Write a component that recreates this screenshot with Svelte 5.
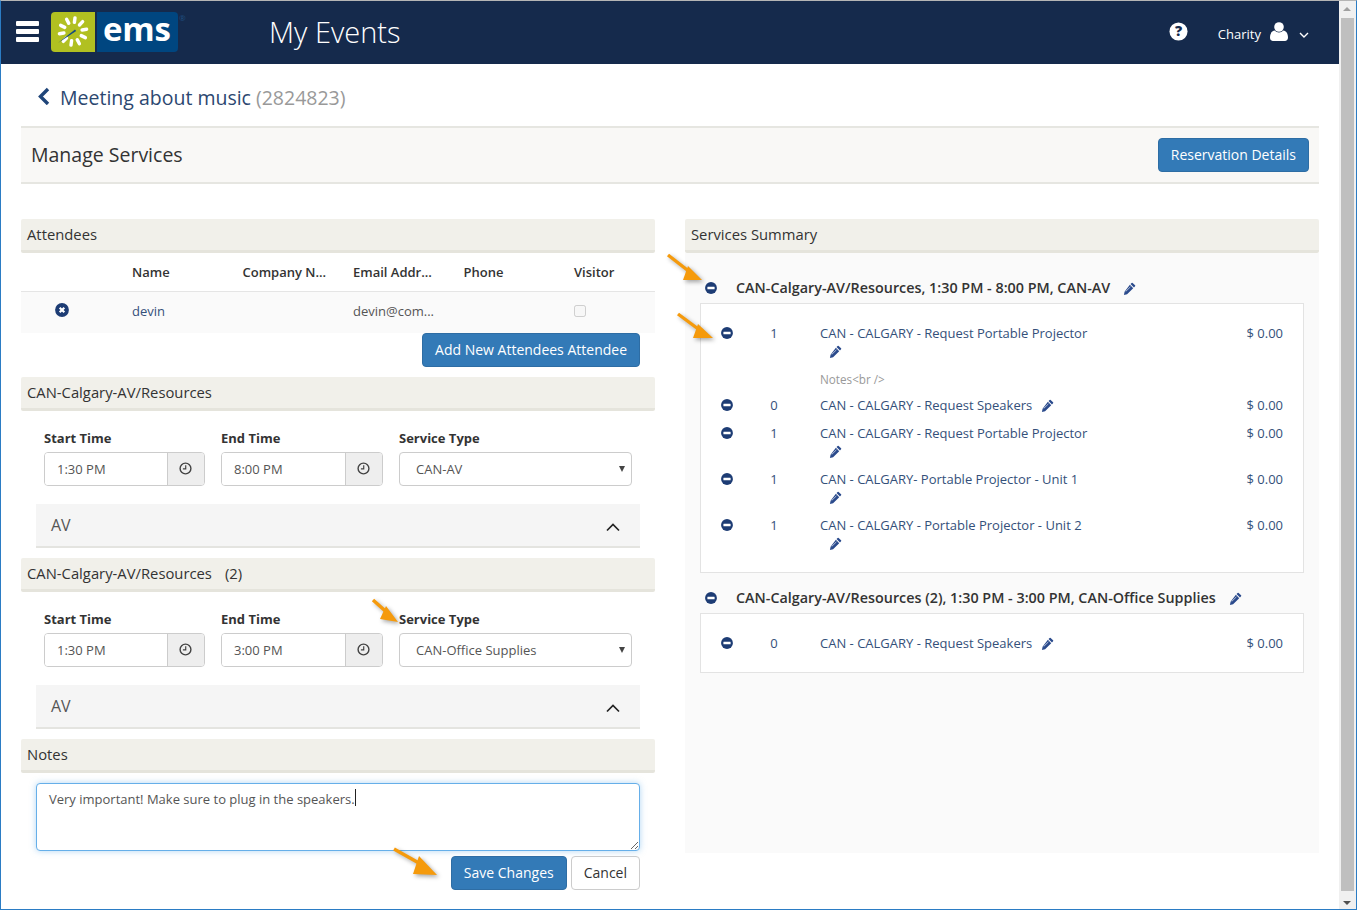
<script>
  const rays = [0, 36, 72, 108, 144, 180, 216, 252, 288, 324];
  const attendeeCols = ['Name', 'Company N...', 'Email Addr...', 'Phone', 'Visitor'];
  const groups = [
    {
      title: 'CAN-Calgary-AV/Resources, 1:30 PM - 8:00 PM, CAN-AV',
      rows: [
        { qty: 1, name: 'CAN - CALGARY - Request Portable Projector', wrap: true, notes: 'Notes<br />' },
        { qty: 0, name: 'CAN - CALGARY - Request Speakers' },
        { qty: 1, name: 'CAN - CALGARY - Request Portable Projector', wrap: true },
        { qty: 1, name: 'CAN - CALGARY- Portable Projector - Unit 1', wrap: true },
        { qty: 1, name: 'CAN - CALGARY - Portable Projector - Unit 2', wrap: true }
      ]
    },
    {
      title: 'CAN-Calgary-AV/Resources (2), 1:30 PM - 3:00 PM, CAN-Office Supplies',
      rows: [{ qty: 0, name: 'CAN - CALGARY - Request Speakers' }]
    }
  ];
  const forms = [
    { title: 'CAN-Calgary-AV/Resources', suffix: '', start: '1:30 PM', end: '8:00 PM', type: 'CAN-AV' },
    { title: 'CAN-Calgary-AV/Resources', suffix: '(2)', start: '1:30 PM', end: '3:00 PM', type: 'CAN-Office Supplies' }
  ];
  const arrows = [
    { x: 662, y: 250, w: 46, h: 36, d: 'M6 5 L33 26', head: 'M26 16 L40 30 L21 30 Z' },
    { x: 672, y: 308, w: 46, h: 36, d: 'M6 6 L33 26', head: 'M26 16 L41 30 L21 30 Z' },
    { x: 368, y: 595, w: 36, h: 32, d: 'M5 5 L23 21', head: 'M18 11 L30 27 L12 24 Z' },
    { x: 388, y: 843, w: 54, h: 38, d: 'M6 6 L38 24', head: 'M31 13 L49 32 L25 31 Z' }
  ];
</script>

{#snippet minus()}
  <svg class="ico" viewBox="0 0 14 14"><circle cx="7" cy="7" r="6.9" fill="#1d3c74" /><rect x="2.800" y="5.400" width="8.400" height="3.200" rx=".5" fill="#fff" /></svg>
{/snippet}

{#snippet pencil()}
  <svg class="pen" viewBox="0 0 14 14"><path fill="#2a4a8c" d="M10.4 1 13 3.6a.8.8 0 0 1 0 1.1l-1.2 1.2-3.7-3.7L9.3 1a.8.8 0 0 1 1.1 0ZM7.4 3 11 6.7l-6.6 6.6L1 14l.7-3.4L7.4 3Z" /><path d="M2.9 10.2 8 5.2" stroke="#fff" stroke-width=".7" /></svg>
{/snippet}

{#snippet clock()}
  <svg class="clock" viewBox="0 0 12 12"><circle cx="6" cy="6" r="5" fill="none" stroke="#444" stroke-width="1.300" /><path d="M6.200 3v3.300H3.600" fill="none" stroke="#444" stroke-width="1.100" /></svg>
{/snippet}

{#snippet sectionHead(text, suffix)}
  <h3 class="section-head">{text}{#if suffix}<span class="head-suffix">{suffix}</span>{/if}</h3>
{/snippet}

<div class="window">
  <div class="main">
    <header class="topbar">
      <div class="burger"><i></i><i></i><i></i></div>
      <div class="logo">
        <div class="logo-green">
          <svg viewBox="0 0 44 40" width="44" height="40">
            {#each rays as r}
              <rect x="20.400" y="4" width="3.400" height="8" rx="1.700" fill="#fff" transform="rotate({r + 8} 22 19.500)" />
            {/each}
            <path d="M7 31 24 17.500l1.200 1.400Z" fill="#134a80" />
          </svg>
        </div>
        <div class="logo-blue">ems</div>
        <span class="reg">®</span>
      </div>
      <h1 class="app-title">My Events</h1>
      <div class="top-right">
        <svg class="help" viewBox="0 0 20 20"><circle cx="10" cy="10" r="9.500" fill="#fff" /><text x="10" y="15" text-anchor="middle" class="help-mark">?</text></svg>
        <span class="user-name">Charity</span>
        <svg class="user" viewBox="0 0 18 19"><circle cx="9" cy="5" r="4.800" fill="#fff" /><path d="M0 15.500C0 11.500 2 9 4.500 8.600 6 10 7.400 10.400 9 10.400s3-.4 4.500-1.800C16 9 18 11.500 18 15.500 18 17.800 16.600 19 15 19H3C1.400 19 0 17.800 0 15.500Z" fill="#fff" /></svg>
        <svg class="caret" viewBox="0 0 10 6"><path d="M1 1l4 4 4-4" fill="none" stroke="#fff" stroke-width="1.400" /></svg>
      </div>
    </header>

    <div class="page">
      <div class="crumb">
        <svg class="back" viewBox="0 0 14 18"><path d="M11 2 3.500 9.500 11 17" fill="none" stroke="#1f4579" stroke-width="3.400" /></svg>
        <span class="meeting">Meeting about music</span>
        <span class="meeting-id">(2824823)</span>
      </div>

      <div class="manage">
        <h2>Manage Services</h2>
        <button class="btn primary">Reservation Details</button>
      </div>

      <div class="columns">
        <section class="left">
          {@render sectionHead('Attendees')}
          <div class="att-row att-head">
            <span></span>
            {#each attendeeCols as c}<span>{c}</span>{/each}
          </div>
          <div class="att-row att-body">
            <span class="att-x">
              <svg class="ico-x" viewBox="0 0 14 14"><circle cx="7" cy="7" r="6.900" fill="#1d3c74" /><path d="M4.700 4.700l4.600 4.600M9.300 4.700l-4.600 4.600" stroke="#fff" stroke-width="2.200" /></svg>
            </span>
            <span class="link">devin</span>
            <span></span>
            <span class="muted">devin@com...</span>
            <span></span>
            <span class="check-cell"><input class="check" type="checkbox" disabled /></span>
          </div>
          <div class="add-row"><button class="btn primary">Add New Attendees Attendee</button></div>

          {#each forms as f}
            {@render sectionHead(f.title, f.suffix)}
            <div class="form-grid">
              <div class="field">
                <span class="label">Start Time</span>
                <div class="time"><input value={f.start} /><span class="addon">{@render clock()}</span></div>
              </div>
              <div class="field">
                <span class="label">End Time</span>
                <div class="time"><input value={f.end} /><span class="addon">{@render clock()}</span></div>
              </div>
              <div class="field">
                <span class="label">Service Type</span>
                <div class="select"><span>{f.type}</span><i class="tri"></i></div>
              </div>
            </div>
            <div class="accordion">
              <span>AV</span>
              <svg class="acc-chev" viewBox="0 0 14 9"><path d="M1 7.500 7 1.500l6 6" fill="none" stroke="#222" stroke-width="1.700" /></svg>
            </div>
          {/each}

          {@render sectionHead('Notes')}
          <div class="notes">
            <textarea>Very important! Make sure to plug in the speakers.</textarea>
            <i class="text-caret"></i>
          </div>
          <div class="actions">
            <button class="btn primary">Save Changes</button>
            <button class="btn plain">Cancel</button>
          </div>
        </section>

        <section class="right">
          {@render sectionHead('Services Summary')}
          <div class="summary">
            {#each groups as g}
              <div class="group-title">
                {@render minus()}
                <span>{g.title}</span>
                {@render pencil()}
              </div>
              <div class="group-box">
                {#each g.rows as r}
                  <div class="svc-row">
                    <span class="svc-ico">{@render minus()}</span>
                    <span class="svc-qty">{r.qty}</span>
                    <div class="svc-name">
                      <span class="link">{r.name}</span>
                      {#if r.wrap}
                        <div class="pen-line">{@render pencil()}</div>
                      {:else}
                        <span class="pen-inline">{@render pencil()}</span>
                      {/if}
                      {#if r.notes}<div class="svc-notes">{r.notes}</div>{/if}
                    </div>
                    <span class="svc-price">$ 0.00</span>
                  </div>
                {/each}
              </div>
            {/each}
          </div>
        </section>
      </div>
    </div>
  </div>

  <div class="scrollbar">
    <i class="sb-up"></i>
    <div class="sb-thumb"></div>
    <i class="sb-down"></i>
  </div>

  {#each arrows as a}
    <svg class="arrow" style="left:{a.x}px;top:{a.y}px;width:{a.w}px;height:{a.h}px" viewBox="0 0 {a.w} {a.h}">
      <path d={a.d} stroke="#f59a0c" stroke-width="3.400" fill="none" />
      <path d={a.head} fill="#f59a0c" />
    </svg>
  {/each}
</div>

<style>
  :global(body) {
    margin: 0;
    font-family: "Open Sans", "Noto Sans", sans-serif;
    font-size: 13px;
    color: #333;
    background: #fff;
  }
  * { box-sizing: border-box; }
  i { display: block; }
  h1, h2, h3 { margin: 0; font-weight: 400; }

  .window {
    position: relative;
    display: flex;
    width: 1357px;
    height: 910px;
    overflow: hidden;
    border: 1px solid #2b7cc4;
    border-top-color: #b5b5b5;
    background: #fff;
  }
  .main { width: 1338px; flex: none; }

  .topbar {
    display: flex;
    align-items: center;
    height: 63px;
    background: #152a4c;
    color: #fff;
  }
  .burger { width: 23px; margin: -2px 12px 0 15px; display: flex; flex-direction: column; gap: 3.500px; }
  .burger i { height: 4.500px; background: #fff; border-radius: 1px; }
  .logo { position: relative; display: flex; gap: 2px; height: 40px; width: 127px; margin-top: -1px; }
  .logo-green { width: 44px; height: 40px; background: #b1c021; border-radius: 4px 0 0 4px; }
  .logo-blue {
    width: 81px;
    height: 40px;
    padding-left: 6px;
    background: #004680;
    border-radius: 0 4px 4px 0;
    color: #fff;
    font-weight: 700;
    font-size: 33px;
    line-height: 34px;
    letter-spacing: -0.2px;
  }
  .reg { position: absolute; left: 128px; top: 0; font-size: 8px; line-height: 12px; color: #1f4f80; }
  .app-title { margin-left: 91px; font-size: 29px; font-weight: 300; color: #fff; line-height: 36px; margin-top: -1px; }
  .top-right { margin-left: auto; display: flex; align-items: center; padding-right: 30px; }
  .help { width: 19px; height: 19px; margin-right: 30px; margin-top: -2px; }
  .help-mark { font-family: "Open Sans", sans-serif; font-weight: 800; font-size: 15px; fill: #152a4c; }
  .user-name { font-size: 13px; color: #fff; margin-right: 9px; margin-top: 3px; }
  .user { width: 18px; height: 19px; margin-right: 11px; margin-top: -2px; }
  .caret { width: 10px; height: 6px; margin-top: 4px; }

  .page { padding: 0 20px; }
  .crumb {
    display: flex;
    align-items: center;
    height: 62px;
    padding: 4px 0 0 15px;
    font-size: 19.500px;
  }
  .back { width: 14px; height: 18px; margin-right: 10px; margin-left: 1px; margin-top: -3px; }
  .meeting { color: #2c4770; margin-left: -1px; }
  .meeting-id { color: #999; margin-left: 5px; }

  .manage {
    display: flex;
    align-items: center;
    justify-content: space-between;
    height: 58px;
    padding: 0 10px;
    background: #f9f8f6;
    border-top: 2px solid #e6e6e1;
    border-bottom: 2px solid #e6e6e1;
  }
  .manage h2 { font-size: 19.500px; color: #333; margin-top: -2px; }

  .btn {
    height: 34px;
    padding: 0 12px 2px;
    border-radius: 4px;
    font: 400 14px "Open Sans", sans-serif;
    cursor: pointer;
  }
  .primary { background: #337ab7; border: 1px solid #2e6da4; color: #fff; }
  .plain { background: #fff; border: 1px solid #ccc; color: #333; }

  .columns { display: flex; gap: 30px; margin-top: 35px; }
  .left, .right { width: 634px; flex: none; }

  .section-head {
    height: 34px;
    padding: 0 6px;
    background: #f1f0ea;
    border-bottom: 3px solid #e5e4dc;
    border-radius: 2px;
    font-size: 14.800px;
    line-height: 31px;
    color: #333;
  }
  .head-suffix { margin-left: 13px; }

  .att-row {
    display: grid;
    grid-template-columns: 111px repeat(5, 110.500px);
    align-items: center;
  }
  .att-head { height: 39px; border-bottom: 1px solid #e5e5e5; font-weight: 600; font-size: 13px; color: #333; }
  .att-body { height: 41px; background: #fafafa; padding-bottom: 3px; }
  .att-x { display: flex; justify-content: center; position: relative; left: -15px; top: -1px; }
  .ico-x { width: 14px; height: 14px; display: block; }
  .link { color: #34507a; }
  .muted { color: #555; }
  .check-cell { position: relative; top: 1px; }
  .check { margin: 0; width: 12px; height: 12px; }
  .add-row { display: flex; justify-content: flex-end; padding-right: 15px; margin-bottom: 10px; }

  .form-grid {
    display: grid;
    grid-template-columns: 161px 162px 233px;
    gap: 16px;
    padding: 18px 0 0 23px;
  }
  .label { display: block; height: 18px; margin-bottom: 5px; font-weight: 700; font-size: 13px; line-height: 18px; color: #333; }
  .time {
    display: flex;
    height: 34px;
    border: 1px solid #ccc;
    border-radius: 4px;
    overflow: hidden;
  }
  .time input {
    flex: 1;
    min-width: 0;
    border: 0;
    padding: 0 12px;
    font: 400 13px "Open Sans", sans-serif;
    color: #555;
    background: #fff;
  }
  .addon {
    width: 37px;
    flex: none;
    display: flex;
    align-items: center;
    justify-content: center;
    background: #eee;
    border-left: 1px solid #ccc;
  }
  .clock { width: 13px; height: 13px; margin-left: -1px; margin-top: -1px; }
  .select {
    position: relative;
    display: flex;
    align-items: center;
    height: 34px;
    padding-left: 16px;
    border: 1px solid #ccc;
    border-radius: 4px;
    color: #555;
    background: #fff;
  }
  .tri {
    position: absolute;
    right: 6px;
    top: 13px;
    border: 3.500px solid transparent;
    border-top: 6px solid #444;
    border-bottom: 0;
  }
  .accordion {
    position: relative;
    display: flex;
    align-items: center;
    height: 44px;
    margin: 18px 15px 10px;
    padding-left: 15px;
    background: #f5f5f5;
    border-bottom: 2px solid #e4e4e0;
    font-size: 16px;
    color: #555;
  }
  .acc-chev { position: absolute; right: 20px; top: 19px; width: 14px; height: 9px; }

  .notes { position: relative; margin: 10px 15px 5px; height: 68px; }
  .notes textarea {
    display: block;
    width: 100%;
    height: 100%;
    padding: 5px 12px;
    border: 1px solid #66afe9;
    border-radius: 4px;
    box-shadow: 0 0 6px rgba(102, 175, 233, .5);
    font: 400 13px/20px "Open Sans", sans-serif;
    color: #555;
    outline: 0;
  }
  .text-caret { position: absolute; left: 319px; top: 6px; width: 1px; height: 17px; background: #222; }
  .actions { display: flex; justify-content: flex-end; gap: 4px; padding-right: 15px; }

  .summary { height: 600px; padding: 25px 15px 0; background: #fafafa; }
  .group-title {
    display: flex;
    align-items: center;
    height: 20px;
    margin-bottom: 5px;
    padding-left: 5px;
    font-weight: 600;
    font-size: 14.350px;
    color: #333;
  }
  .group-title span { margin: -2px 13px 0 19px; }
  .ico { width: 12px; height: 12px; flex: none; display: block; }
  .pen { width: 13px; height: 13px; display: block; flex: none; }
  .group-box {
    margin-bottom: 15px;
    padding: 15px 20px;
    background: #fff;
    border: 1px solid #e3e3e3;
  }
  .svc-row { display: grid; grid-template-columns: 33px 40px 1fr auto; }
  .svc-row > span, .svc-name { line-height: 18px; padding: 5px 0; }
  .svc-ico { padding-top: 8px !important; }
  .svc-qty { text-align: center; color: #34507a; }
  .svc-name { padding-left: 26px !important; }
  .svc-price { color: #34507a; }
  .pen-inline { display: inline-block; vertical-align: -2px; margin-left: 5px; }
  .pen-line { height: 18px; padding: 3px 0 0 9px; }
  .svc-notes { height: 26px; padding-top: 10px; font-size: 11.700px; color: #999; line-height: 18px; }

  .scrollbar {
    position: relative;
    width: 17px;
    flex: none;
    background: #f0f0f0;
    padding: 17px 2px 0;
  }
  .sb-thumb { height: 873px; width: 13px; background: #bfbfbf; }
  .sb-up, .sb-down {
    position: absolute;
    left: 4px;
    border: 4px solid transparent;
  }
  .sb-up { top: 6px; border-top: 0; border-bottom: 4px solid #a0a0a0; }
  .sb-down { bottom: 4px; border-bottom: 0; border-top: 4px solid #505050; }

  .arrow {
    position: absolute;
    filter: drop-shadow(2px 2px 2px rgba(0, 0, 0, .35));
    overflow: visible;
    margin: -1px 0 0 -1px;
  }
</style>
